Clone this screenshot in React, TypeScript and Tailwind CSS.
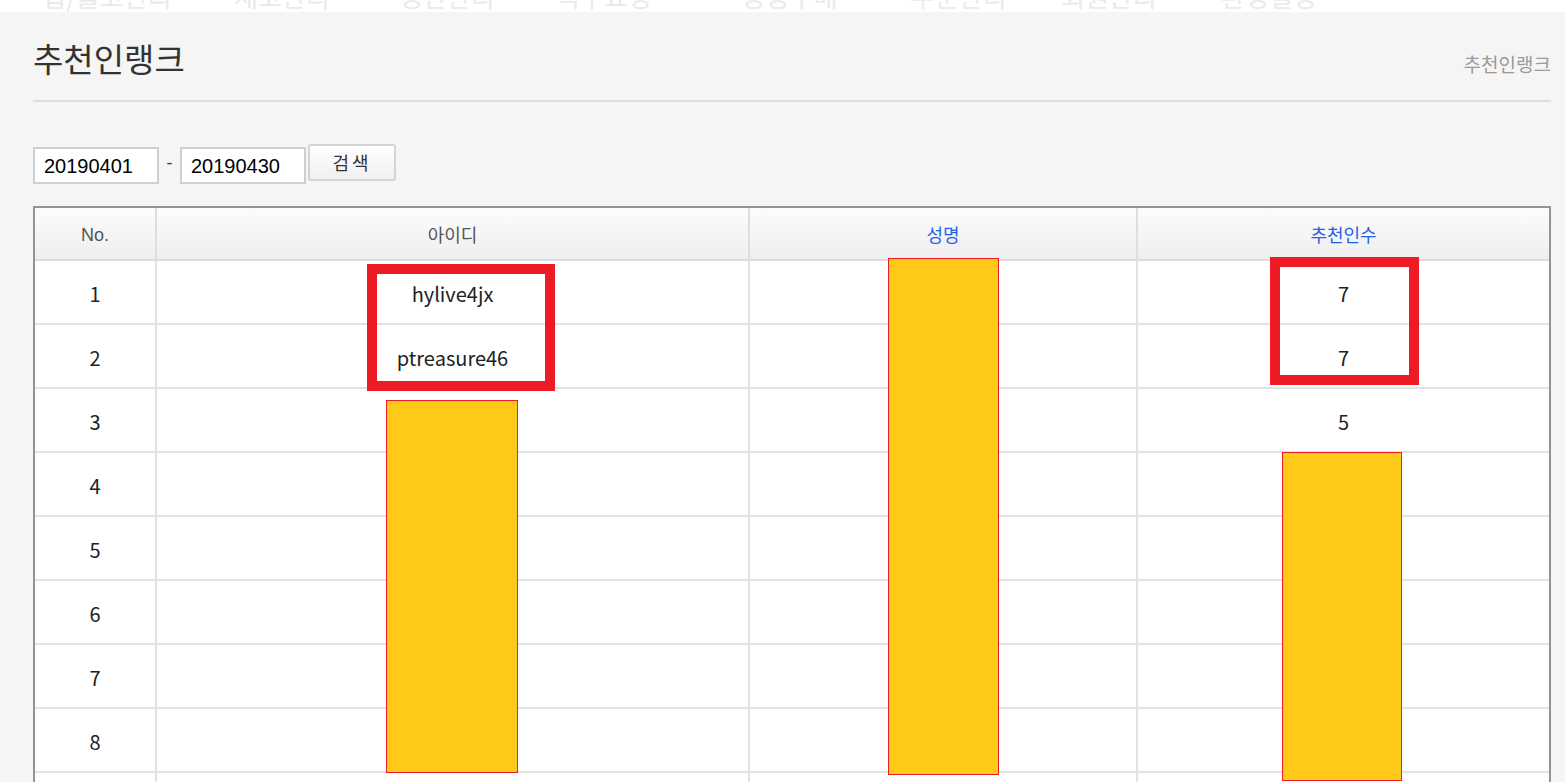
import React from "react";

const menu = [
  { label: "입/출고관리", w: "w-[192px]" },
  { label: "재고관리", w: "w-[165px]" },
  { label: "정산관리", w: "w-[157px]" },
  { label: "직구요청", w: "w-[186px]" },
  { label: "공동구매", w: "w-[169px]" },
  { label: "주문관리", w: "w-[150px]" },
  { label: "회원관리", w: "w-[160px]" },
  { label: "환경설정", w: "w-[120px]" },
];

const rows = [
  { no: 1, id: "hylive4jx", cnt: "7" },
  { no: 2, id: "ptreasure46", cnt: "7" },
  { no: 3, id: "", cnt: "5" },
  { no: 4, id: "", cnt: "" },
  { no: 5, id: "", cnt: "" },
  { no: 6, id: "", cnt: "" },
  { no: 7, id: "", cnt: "" },
  { no: 8, id: "", cnt: "" },
  { no: 9, id: "", cnt: "" },
];

const ko = "font-['Noto_Sans_CJK_KR','Noto_Sans',sans-serif]";

export default function App() {
  return (
    <div className={`relative h-[782px] w-[1565px] overflow-hidden bg-[#f5f5f5] ${ko}`}>
      {/* cut-off top menu */}
      <div className="h-[12px] overflow-hidden bg-white">
        <div className="-mt-[19px] flex pl-[42px] text-[26px] leading-[30px] text-[#eaeaea]">
          {menu.map((m) => (
            <div key={m.label} className={`${m.w} shrink-0 whitespace-nowrap`}>
              {m.label}
            </div>
          ))}
        </div>
      </div>

      <div className="pl-[33px] pr-[14px]">
        {/* title row */}
        <div className="flex items-end justify-between border-b-2 border-[#dcdde0] pb-[22px] pt-[26px]">
          <h1 className="text-[33px] leading-[40px] text-[#333]">추천인랭크</h1>
          <div className="mb-[4px] text-[19px] leading-[20px] text-[#9a9a9a]">추천인랭크</div>
        </div>

        {/* search row */}
        <div className="mt-[42px] flex items-start">
          <div className="mt-[3px] flex h-[37px] w-[126px] items-center border-2 border-[#cfcfcf] bg-white pl-[9px] font-['Liberation_Sans',Arial,sans-serif] text-[20px] text-black">
            20190401
          </div>
          <div className="mt-[3px] flex h-[32px] w-[21px] items-center justify-center font-['Liberation_Sans',Arial,sans-serif] text-[18px] text-[#444]">
            -
          </div>
          <div className="mt-[3px] flex h-[37px] w-[126px] items-center border-2 border-[#cfcfcf] bg-white pl-[9px] font-['Liberation_Sans',Arial,sans-serif] text-[20px] text-black">
            20190430
          </div>
          <button className="ml-[2px] flex h-[37px] w-[88px] items-center justify-center rounded-[3px] border-2 border-[#d4d4d4] bg-gradient-to-b from-[#ffffff] to-[#f0f0f0] text-[18px] tracking-[3px] text-[#333]">
            검색
          </button>
        </div>

        {/* table */}
        <div className="mt-[22px] border-2 border-[#8d949b] bg-white">
          <div className="grid h-[53px] grid-cols-[122px_593px_388px_1fr] border-b-2 border-[#dedede] bg-gradient-to-b from-[#fcfcfc] to-[#efefef] text-[18px]">
            <div className="flex items-center justify-center border-r-2 border-[#dedede] pt-[4px] font-['Liberation_Sans',Arial,sans-serif] text-[18px] text-[#555]">
              No.
            </div>
            <div className="flex items-center justify-center border-r-2 border-[#dedede] pt-[2px] text-[#555]">아이디</div>
            <div className="flex items-center justify-center border-r-2 border-[#dedede] pt-[2px] text-[#1f63ea]">성명</div>
            <div className="flex items-center justify-center pt-[2px] text-[#1f63ea]">추천인수</div>
          </div>
          {rows.map((r) => (
            <div
              key={r.no}
              className="grid h-[64px] grid-cols-[122px_593px_388px_1fr] border-b-2 border-[#e2e2e2] text-[20px] text-[#222]"
            >
              <div className="flex items-center justify-center border-r-2 border-[#e2e2e2] pt-[4px]">{r.no}</div>
              <div className="flex items-center justify-center border-r-2 border-[#e2e2e2] pt-[4px]">{r.id}</div>
              <div className="flex items-center justify-center border-r-2 border-[#e2e2e2]"></div>
              <div className="flex items-center justify-center pt-[4px]">{r.cnt}</div>
            </div>
          ))}
        </div>
      </div>

      {/* redaction / annotation overlays */}
      <div className="absolute left-[386px] top-[400px] h-[373px] w-[132px] border border-[#ee1c25] bg-[#fec919]" />
      <div className="absolute left-[888px] top-[258px] h-[517px] w-[111px] border border-[#ee1c25] bg-[#fec919]" />
      <div className="absolute left-[1282px] top-[452px] h-[329px] w-[120px] border border-[#ee1c25] bg-[#fec919]" />
      <div className="absolute left-[367px] top-[264px] h-[127px] w-[188px] border-[10px] border-[#ed1c24]" />
      <div className="absolute left-[1270px] top-[257px] h-[128px] w-[149px] border-[10px] border-[#ed1c24]" />
    </div>
  );
}
